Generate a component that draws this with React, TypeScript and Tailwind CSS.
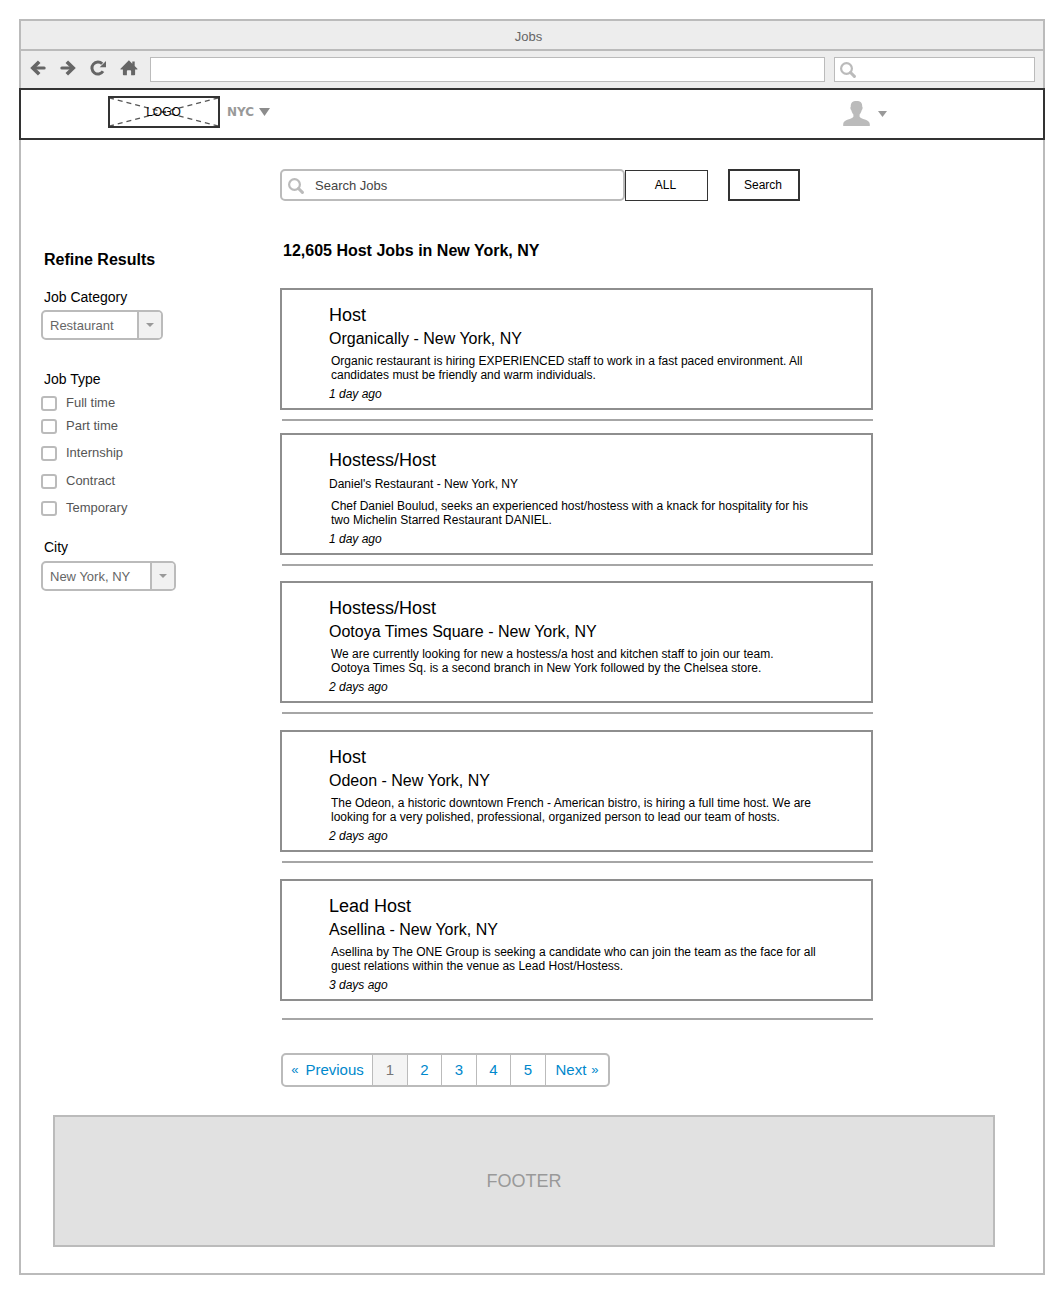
import React from "react";

type Job = {
  title: string;
  company: string;
  small?: boolean;
  lines: [string, string];
  posted: string;
  gap: string;
  ruleGap: string;
};

const jobs: Job[] = [
  {
    title: "Host",
    company: "Organically - New York, NY",
    lines: [
      "Organic restaurant is hiring EXPERIENCED staff to work in a fast paced environment. All",
      "candidates must be friendly and warm individuals.",
    ],
    posted: "1 day ago",
    gap: "mt-[27px]",
    ruleGap: "mt-[9px]",
  },
  {
    title: "Hostess/Host",
    company: "Daniel's Restaurant - New York, NY",
    small: true,
    lines: [
      "Chef Daniel Boulud, seeks an experienced host/hostess with a knack for hospitality for his",
      "two Michelin Starred Restaurant DANIEL.",
    ],
    posted: "1 day ago",
    gap: "mt-3",
    ruleGap: "mt-[9px]",
  },
  {
    title: "Hostess/Host",
    company: "Ootoya Times Square - New York, NY",
    lines: [
      "We are currently looking for new a hostess/a host and kitchen staff to join our team.",
      "Ootoya Times Sq. is a second branch in New York followed by the Chelsea store.",
    ],
    posted: "2 days ago",
    gap: "mt-[15px]",
    ruleGap: "mt-[9px]",
  },
  {
    title: "Host",
    company: "Odeon - New York, NY",
    lines: [
      "The Odeon, a historic downtown French - American bistro, is hiring a full time host. We are",
      "looking for a very polished, professional, organized person to lead our team of hosts.",
    ],
    posted: "2 days ago",
    gap: "mt-4",
    ruleGap: "mt-[9px]",
  },
  {
    title: "Lead Host",
    company: "Asellina - New York, NY",
    lines: [
      "Asellina by The ONE Group is seeking a candidate who can join the team as the face for all",
      "guest relations within the venue as Lead Host/Hostess.",
    ],
    posted: "3 days ago",
    gap: "mt-4",
    ruleGap: "mt-[17px]",
  },
];

const jobTypes = [
  { name: "Full time", gap: "mt-[5px]" },
  { name: "Part time", gap: "mt-[3px]" },
  { name: "Internship", gap: "mt-[7px]" },
  { name: "Contract", gap: "mt-2" },
  { name: "Temporary", gap: "mt-[7px]" },
];

function Magnifier({ className }: { className: string }) {
  return (
    <svg className={className} width="16" height="16" viewBox="0 0 16 16" fill="none" stroke="#bbb" aria-hidden="true">
      <circle cx="6.5" cy="6.5" r="5.4" strokeWidth="2.2" />
      <path d="M10.5 10.5 14.4 14.4" strokeWidth="3" strokeLinecap="round" />
    </svg>
  );
}

function ArrowIcon({ flip }: { flip?: boolean }) {
  return (
    <svg className={flip ? "-scale-x-100" : ""} width="16" height="16" viewBox="0 0 16 16" fill="none" stroke="#666" aria-hidden="true">
      <path d="M9.2 1.7 2.8 8 9.2 14.3" strokeWidth="3.6" />
      <path d="M3.5 8H14.2" strokeWidth="3" strokeLinecap="round" />
    </svg>
  );
}

function ReloadIcon() {
  return (
    <svg width="16" height="16" viewBox="0 0 16 16" aria-hidden="true">
      <path d="M12.2 3.8A6 6 0 1 0 13 11.3" fill="none" stroke="#666" strokeWidth="3" />
      <path d="M16 .9V7.2H9.7Z" fill="#666" />
    </svg>
  );
}

function HomeIcon() {
  return (
    <svg width="18" height="16" viewBox="0 0 18 16" fill="#666" aria-hidden="true">
      <path d="M8.9 .3 12.3 3.7V1.6H14.7V6.1L17.4 8.8V9.5H15.1V14.4Q15.1 15.2 14.3 15.2H11.1V11Q11.1 10.2 10.2 10.2H7.8Q6.9 10.2 6.9 11V15.2H3.7Q2.9 15.2 2.9 14.4V9.5H.5V8.8Z" />
    </svg>
  );
}

function Dropdown({ id, value, width }: { id: string; value: string; width: string }) {
  return (
    <div className={"relative " + width}>
      <select
        id={id}
        className="h-[30px] w-full appearance-none rounded-[5px] border-2 border-[#bbb] bg-white pt-[2px] pr-[26px] pl-[7px] text-[13px] text-[#666]"
      >
        <option>{value}</option>
      </select>
      <span className="pointer-events-none absolute inset-y-[2px] right-[2px] flex w-6 items-center justify-center rounded-r-[3px] border-l-2 border-[#bbb] bg-[#f1f1f1]">
        <svg width="8" height="4" viewBox="0 0 8 4" aria-hidden="true">
          <path d="M0 0H8L4 4Z" fill="#999" />
        </svg>
      </span>
    </div>
  );
}

function JobCard({ job }: { job: Job }) {
  return (
    <li className="list-none">
      <article className={"border-2 border-[#8e8e8e] pt-[13px] pb-[7px] pl-[47px] " + job.gap}>
        <h2 className="text-[18px] leading-6">{job.title}</h2>
        <p className={job.small ? "text-[12px] leading-6" : "text-[16px] leading-6"}>{job.company}</p>
        <p className="mt-[3px] ml-[2px] text-[12px] leading-[14px] whitespace-nowrap">
          {job.lines[0]}
          <br />
          {job.lines[1]}
        </p>
        <p className="mt-[5px] text-[12px] leading-[14px] italic">{job.posted}</p>
      </article>
      <hr className={"ml-[2px] border-t-2 border-[#a6a6a6] " + job.ruleGap} />
    </li>
  );
}

export default function App() {
  const cell = "flex w-[34px] items-center justify-center border-r border-[#bbb]";
  const wideCell = "flex w-[35px] items-center justify-center border-r border-[#bbb]";
  return (
    <div className="bg-white p-[19px] font-['Liberation_Sans',Arial,sans-serif] text-black">
      <div className="border-2 border-[#bbb]">
        <div className="flex h-[30px] items-center justify-center border-b-2 border-[#bbb] bg-[#ededed] pt-[3px] pr-[7px] text-[13px] text-[#666]">
          Jobs
        </div>
        <div className="flex h-[37px] items-center bg-[#ededed] pr-2 pl-[9px]">
          <div className="mr-3 flex items-center gap-[14px] pb-[3px]">
            <button type="button" aria-label="Back">
              <ArrowIcon />
            </button>
            <button type="button" aria-label="Forward">
              <ArrowIcon flip />
            </button>
            <button type="button" aria-label="Reload">
              <ReloadIcon />
            </button>
            <button type="button" aria-label="Home">
              <HomeIcon />
            </button>
          </div>
          <input aria-label="Address" type="text" className="h-[25px] min-w-0 flex-1 border border-[#bbb] bg-white px-2 text-[13px]" />
          <div className="relative ml-[9px] w-[201px]">
            <input aria-label="Web search" type="text" className="block h-[25px] w-full border border-[#bbb] bg-white pr-2 pl-7 text-[13px]" />
            <Magnifier className="absolute top-[5px] left-[6px]" />
          </div>
        </div>

        <header className="-mx-[2px] flex h-[52px] items-start border-2 border-[#333] pt-[6px] pl-[87px]">
          <a href="#" className="relative flex h-8 w-28 items-center justify-center border-2 border-[#333] text-[12px]">
            <svg className="absolute inset-0 h-full w-full" viewBox="0 0 108 28" preserveAspectRatio="none" fill="none" stroke="#555" strokeWidth="1.3" strokeDasharray="5 4" strokeDashoffset="1" aria-hidden="true">
              <path d="M0 0 108 28M0 28 108 0" />
            </svg>
            <span className="relative pr-px">LOGO</span>
          </a>
          <button type="button" className="ml-[7px] flex h-8 items-center gap-[5px] font-['DejaVu_Sans',sans-serif] text-[12px] font-bold text-[#999]">
            NYC
            <svg width="11" height="8" viewBox="0 0 11 8" aria-hidden="true">
              <path d="M0 0H11L5.5 8Z" fill="#8c8c8c" />
            </svg>
          </button>
          <button type="button" aria-label="Account" className="mt-[5px] mr-[156px] ml-auto flex items-center gap-2">
            <svg width="27" height="25" viewBox="0 0 27 25" fill="#bbb" aria-hidden="true">
              <path d="M13.5 0C17.5 0 19.4 1.8 19.2 5.6C20 6.2 19.6 8.8 18.6 9.6C18.2 11.6 17.4 12.6 16.6 13.4V15.8C17.4 18.2 26.8 18.6 26.8 23V25H.2V23C.2 18.6 9.6 18.2 10.4 15.8V13.4C9.6 12.6 8.8 11.6 8.4 9.6C7.4 8.8 7 6.2 7.8 5.6C7.6 1.8 9.5 0 13.5 0Z" />
            </svg>
            <svg width="9" height="6" viewBox="0 0 9 6" aria-hidden="true">
              <path d="M0 0H9L4.5 6Z" fill="#999" />
            </svg>
          </button>
        </header>

        <main className="flex pl-5">
          <aside className="w-[239px] shrink-0 pt-[110px]">
            <h2 className="ml-[3px] text-[16px] leading-5 font-bold">Refine Results</h2>
            <label htmlFor="category" className="mt-[18px] mb-1 ml-[3px] block text-[14px] leading-[18px]">
              Job Category
            </label>
            <Dropdown id="category" value="Restaurant" width="w-[122px]" />
            <fieldset className="mt-[30px]">
              <legend className="ml-[3px] text-[14px] leading-[18px]">Job Type</legend>
              {jobTypes.map((t) => (
                <label key={t.name} className={"flex h-5 items-center gap-[9px] text-[13px] text-[#555] " + t.gap}>
                  <input type="checkbox" className="h-[15px] w-4 appearance-none rounded-[3px] border-2 border-[#bbb] bg-white checked:bg-[#bbb]" />
                  {t.name}
                </label>
              ))}
            </fieldset>
            <label htmlFor="city" className="mt-5 mb-[5px] ml-[3px] block text-[14px] leading-[18px]">
              City
            </label>
            <Dropdown id="city" value="New York, NY" width="w-[135px]" />
          </aside>

          <section className="max-w-[593px] min-w-0 flex-1 pt-[29px]">
            <form className="flex h-8 items-stretch" onSubmit={(e) => e.preventDefault()}>
              <div className="relative max-w-[345px] flex-1">
                <input
                  aria-label="Search Jobs"
                  type="text"
                  placeholder="Search Jobs"
                  className="block h-8 w-full rounded-[5px] border-2 border-[#bbb] bg-white pl-[33px] text-[13px] text-[#444] placeholder:text-[#444]"
                />
                <Magnifier className="absolute top-[9px] left-2" />
              </div>
              <button type="button" className="mt-px w-[83px] border border-[#333] bg-white pr-[2px] pb-[2px] text-[12px]">
                ALL
              </button>
              <button type="submit" className="ml-5 w-[72px] border-2 border-[#333] bg-white pr-[2px] text-[12px]">
                Search
              </button>
            </form>
            <h1 className="mt-10 ml-[3px] text-[16px] leading-5 font-bold">12,605 Host Jobs in New York, NY</h1>
            <ul>
              {jobs.map((job, i) => (
                <JobCard key={i} job={job} />
              ))}
            </ul>
            <nav aria-label="Pages" className="mt-[33px] ml-px flex h-[34px] w-max overflow-hidden rounded-[5px] border-2 border-[#bbb] text-[15px] text-[#0088cc]">
              <a href="#" className="flex w-[90px] items-center justify-center gap-[7px] border-r border-[#bbb]">
                <span className="text-[13px]">«</span>Previous
              </a>
              <a href="#" aria-current="page" className="flex w-[35px] items-center justify-center border-r border-[#bbb] bg-[#f4f4f4] text-[#777]">
                1
              </a>
              <a href="#" className={cell}>2</a>
              <a href="#" className={wideCell}>3</a>
              <a href="#" className={cell}>4</a>
              <a href="#" className={wideCell}>5</a>
              <a href="#" className="flex w-[62px] items-center justify-center gap-[5px]">
                Next<span className="text-[13px]">»</span>
              </a>
            </nav>
          </section>
        </main>

        <footer className="mt-7 mr-12 mb-[26px] ml-8 flex h-[132px] items-center justify-center border-2 border-[#bbb] bg-[#e1e1e1] text-[18px] text-[#999]">
          FOOTER
        </footer>
      </div>
    </div>
  );
}
